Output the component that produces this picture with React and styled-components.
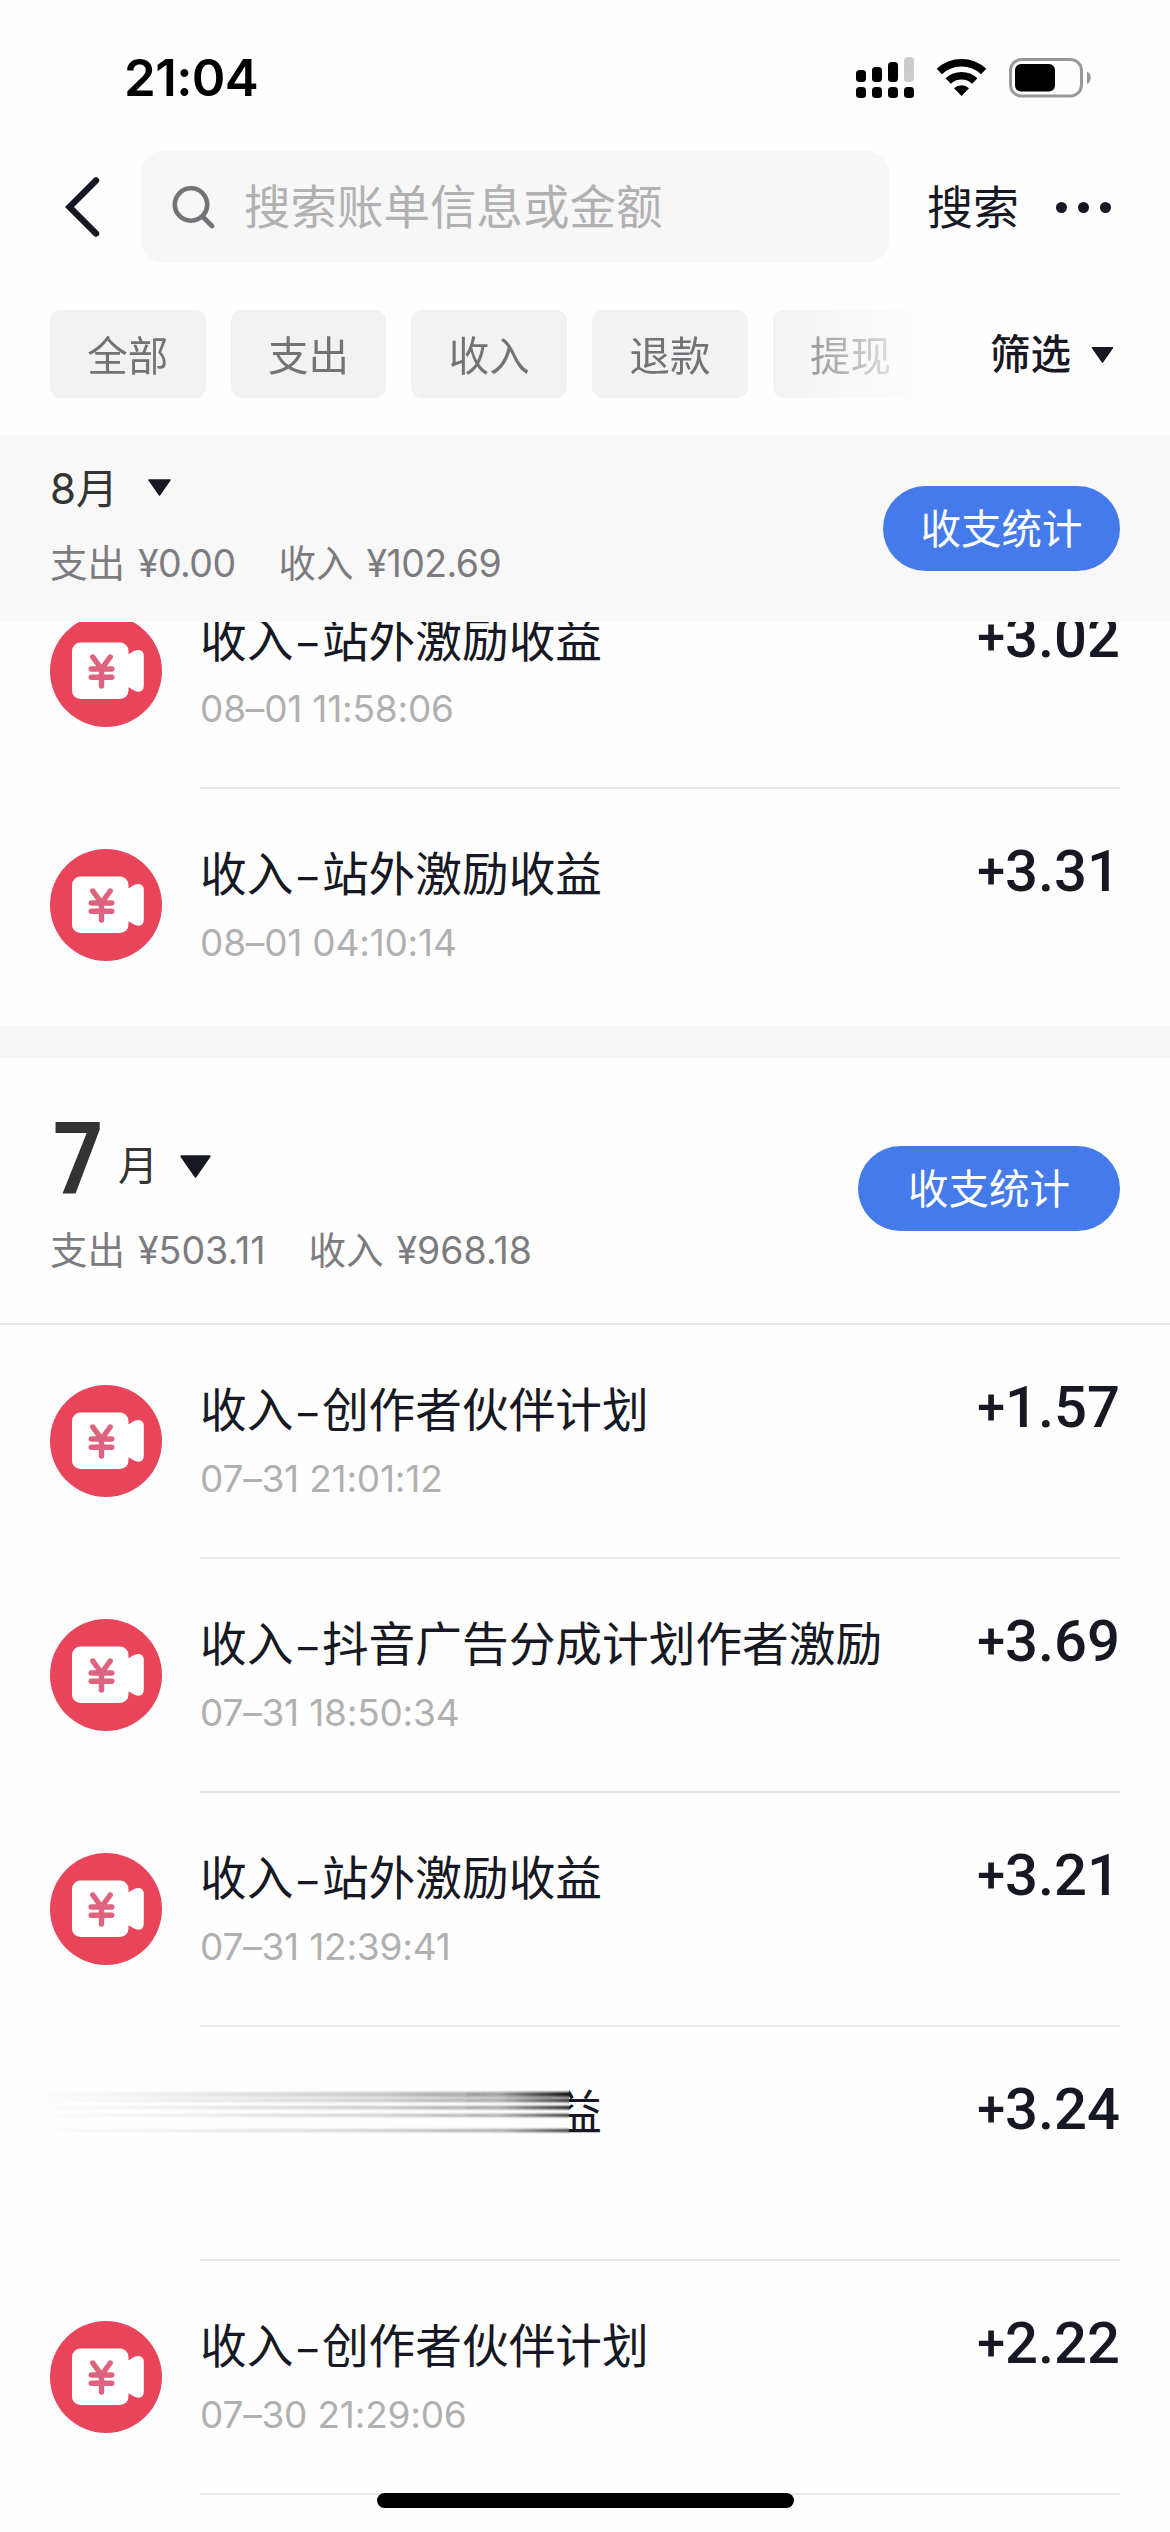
import React from 'react';
import styled, { createGlobalStyle } from 'styled-components';

const GlobalStyle = createGlobalStyle`
  * {
    box-sizing: border-box;
  }
  body {
    margin: 0;
    background-color: #fefefe;
    font-family: Inter, 'Noto Sans CJK SC', sans-serif;
    color: #161823;
  }
`;

const Screen = styled.main`
  position: relative;
  display: flex;
  flex-direction: column;
  width: 1170px;
  height: 2532px;
  overflow: hidden;
  background-color: #fefefe;
`;

const StatusBar = styled.div`
  display: flex;
  align-items: center;
  justify-content: space-between;
  height: 144px;
  padding: 12px 78px 0 124px;
  flex-shrink: 0;
`;
const Time = styled.span`
  color: #000;
  font-size: 51px;
  font-weight: 600;
  line-height: 60px;
  letter-spacing: -0.6px;
`;

const NavBar = styled.div`
  display: flex;
  align-items: center;
  height: 126px;
  padding: 0 58px 0 62px;
  flex-shrink: 0;
`;
const SearchBox = styled.div`
  display: flex;
  align-items: center;
  width: 748px;
  height: 112px;
  margin-left: 39px;
  padding-left: 30px;
  border-radius: 22px;
  background-color: #f7f7f7;
`;
const Placeholder = styled.span`
  margin-left: 29px;
  color: #b1b1b3;
  font-size: 46.5px;
  line-height: 60px;
`;
const SearchAction = styled.span`
  margin-left: 38px;
  font-size: 46px;
  line-height: 60px;
`;
const More = styled.div`
  display: flex;
  gap: 11px;
  margin-left: 37px;
  span {
    width: 11px;
    height: 11px;
    border-radius: 50%;
    background-color: #161823;
  }
`;

const FilterBar = styled.div`
  display: flex;
  align-items: center;
  height: 165px;
  padding: 3px 50px 0;
  flex-shrink: 0;
`;
const Chips = styled.div`
  display: flex;
  gap: 25px;
  width: 880px;
  flex-shrink: 0;
  overflow: hidden;
  mask-image: linear-gradient(to right, #000 715px, transparent 880px);
`;
const Chip = styled.span`
  width: 155.7px;
  height: 88px;
  flex-shrink: 0;
  border-radius: 11px;
  background-color: #f2f2f2;
  color: #737377;
  font-size: 40.5px;
  line-height: 93px;
  text-align: center;
`;
const FilterAction = styled.div`
  display: flex;
  align-items: center;
  gap: 20px;
  margin: 2px 0 0 60px;
  font-size: 40.5px;
  font-weight: 500;
  line-height: 60px;
  white-space: nowrap;
`;

const StickyMonth = styled.section`
  display: flex;
  align-items: center;
  justify-content: space-between;
  height: 187px;
  padding: 0 50px;
  flex-shrink: 0;
  background-color: #f8f8f8;
`;
const StickyInfo = styled.div`
  padding-bottom: 7px;
`;
const StickyTitle = styled.div`
  display: flex;
  align-items: center;
  color: #333;
  font-size: 42px;
  line-height: 50px;
  svg {
    margin: 0 0 2px 30px;
  }
`;
const Summary = styled.div`
  display: flex;
  gap: 43px;
  margin-top: ${(props) => props.$top}px;
  color: #7c7c80;
  font-size: 37.5px;
  font-weight: 400;
  line-height: 46px;
  white-space: pre;
`;
const Money = styled.span`
  margin-left: 13px;
  letter-spacing: ${(props) => props.$spacing}px;
`;
const StatButton = styled.button`
  width: ${(props) => props.$width}px;
  height: 85px;
  padding: 0;
  border: 0;
  border-radius: 43px;
  background-color: #447aea;
  color: #fff;
  font-family: inherit;
  font-size: 40.5px;
  line-height: 87px;
`;

const List = styled.div`
  flex: 1;
  overflow: hidden;
`;
const Group = styled.div`
  margin-top: ${(props) => props.$offset || 0}px;
`;
const Band = styled.div`
  height: 32px;
  margin-top: 3px;
  background-color: #f7f7f7;
`;
const MonthHeader = styled.section`
  display: flex;
  align-items: center;
  justify-content: space-between;
  height: 267px;
  padding: 0 50px 5px;
  border-bottom: 2px solid #e6e6e6;
`;
const MonthInfo = styled.div`
  padding-top: 6px;
`;
const MonthTitle = styled.div`
  display: flex;
  align-items: center;
  height: 100px;
  color: #333;
  svg {
    margin: 16px 0 0 22px;
  }
`;
const MonthNumber = styled.span`
  width: 65px;
  padding-left: 3px;
  font-family: Roboto, sans-serif;
  font-size: 101px;
  font-weight: 700;
  line-height: 100px;
  transform: scaleX(0.87);
  transform-origin: 3px 50%;
`;
const MonthUnit = styled.span`
  margin: 15px 0 0 3px;
  font-size: 40px;
  line-height: 50px;
`;

const Row = styled.div`
  display: grid;
  grid-template-columns: 150px 1fr;
  height: 234px;
  padding: 0 50px;
`;
const RowIcon = styled.div`
  padding-top: 60px;
`;
const RowBody = styled.div`
  display: flex;
  justify-content: space-between;
  border-bottom: 2px solid ${(props) => (props.$last ? 'transparent' : '#e6e6e6')};
`;
const RowTitle = styled.div`
  padding-top: 55px;
  font-size: 46.7px;
  line-height: 60px;
  white-space: nowrap;
`;
const Dash = styled.span`
  display: inline-block;
  width: 28.5px;
  font-size: 39px;
  text-align: center;
`;
const RowDate = styled.div`
  margin-top: 12px;
  color: #b0b0b1;
  font-size: 37px;
  line-height: 48px;
  letter-spacing: -0.2px;
`;
const Amount = styled.div`
  display: flex;
  padding-top: 52px;
  font-family: Roboto, sans-serif;
  font-size: 58px;
  font-weight: 500;
  line-height: 60px;
`;
const Sign = styled.span`
  font-size: 50px;
  line-height: 61px;
`;

const SmearedTitle = styled.div`
  display: flex;
  margin-left: -167px;
  padding-top: 55px;
  height: 115px;
`;
const CutGlyph = styled.span`
  display: flex;
  justify-content: flex-end;
  width: 33px;
  overflow: hidden;
  font-size: 46.7px;
  line-height: 60px;
`;

const HomeIndicator = styled.div`
  position: absolute;
  left: 377px;
  bottom: 24px;
  width: 417px;
  height: 15px;
  border-radius: 8px;
  background-color: #000;
`;

const chips = ['全部', '支出', '收入', '退款', '提现'];

const augustRows = [
  { title: '站外激励收益', date: '08–01 11:58:06', amount: '3.02' },
  { title: '站外激励收益', date: '08–01 04:10:14', amount: '3.31' },
];

const julyRows = [
  { title: '创作者伙伴计划', date: '07–31 21:01:12', amount: '1.57' },
  { title: '抖音广告分成计划作者激励', date: '07–31 18:50:34', amount: '3.69' },
  { title: '站外激励收益', date: '07–31 12:39:41', amount: '3.21' },
  { smeared: true, amount: '3.24' },
  { title: '创作者伙伴计划', date: '07–30 21:29:06', amount: '2.22' },
];

function StatusIcons() {
  return (
    <svg width="236" height="46" viewBox="856 55 236 46">
      <g>
        <rect x="856" y="70" width="10" height="12" rx="3.5" />
        <rect x="872" y="67" width="10" height="15" rx="3.5" />
        <rect x="888" y="62" width="10" height="20" rx="3.5" />
        <rect x="904" y="57" width="10" height="25" rx="3.5" fill="#ccc" />
        {[856, 872, 888, 904].map((x) => (
          <rect key={x} x={x} y="87" width="10" height="11" rx="3.5" />
        ))}
      </g>
      <g fill="none" stroke="#000" strokeWidth="7.6">
        <path d="M939.3 71.6a32.3 32.3 0 0 1 44.4 0" />
        <path d="M948.2 81a19.3 19.3 0 0 1 26.6 0" />
      </g>
      <path d="M954 88.2a11 11 0 0 1 15 0L961.5 96z" />
      <rect x="1010.5" y="59.5" width="71" height="36.5" rx="11" fill="none" stroke="#999" strokeWidth="3" />
      <rect x="1015" y="64" width="40" height="27.5" rx="6" />
      <path d="M1087 71.5c5 2 5 10.5 0 12.5z" fill="#999" />
    </svg>
  );
}

function BackIcon() {
  return (
    <svg width="40" height="64" viewBox="0 0 40 64" fill="none">
      <path d="M34 5.5 L7.5 32 L34 58.5" stroke="#161823" strokeWidth="6.4" strokeLinecap="round" strokeLinejoin="miter" />
    </svg>
  );
}

function SearchIcon() {
  return (
    <svg width="44" height="44" viewBox="0 0 44 44" fill="none" stroke="#737377" strokeWidth="4.6" strokeLinecap="round">
      <circle cx="20" cy="19.5" r="16.2" />
      <path d="M32 32 L41 41" />
    </svg>
  );
}

function Caret({ width, height }) {
  return (
    <svg width={width} height={height} viewBox="0 0 22 16">
      <path d="M1 0.8h20L11 15.2z" fill="#161823" stroke="#161823" strokeWidth="1.4" strokeLinejoin="round" />
    </svg>
  );
}

function IncomeIcon() {
  return (
    <svg width="112" height="112" viewBox="0 0 112 112">
      <circle cx="56" cy="56" r="56" fill="#e8455a" />
      <rect x="22" y="27.5" width="56.5" height="56.5" rx="8.5" fill="#fff" />
      <path d="M78 39.5 L84.5 35.8 Q93.8 32.5 93.8 41.5 V70 Q93.8 79 84.5 75.8 L78 72z" fill="#fff" />
      <path
        d="M42.8 42 L51.5 54 L60.2 42 M51.5 54 V71 M41.2 54 H61.8 M41.2 62.3 H61.8"
        fill="none"
        stroke="#de637f"
        strokeWidth="5.4"
        strokeLinecap="round"
      />
    </svg>
  );
}

// horizontal streaks left of the last visible character
function Smear() {
  return (
    <svg width="536" height="60" viewBox="0 0 536 60">
      <defs>
        <linearGradient id="streak" x1="0" x2="536" y1="0" y2="0" gradientUnits="userSpaceOnUse">
          <stop offset="0" stopColor="#111" stopOpacity="0" />
          <stop offset="0.3" stopColor="#111" stopOpacity="0.08" />
          <stop offset="0.65" stopColor="#111" stopOpacity="0.22" />
          <stop offset="0.87" stopColor="#111" stopOpacity="0.42" />
          <stop offset="1" stopColor="#111" />
        </linearGradient>
        <filter id="soften" x="0" y="-10%" width="100%" height="120%">
          <feGaussianBlur stdDeviation="0 0.9" />
        </filter>
      </defs>
      <g fill="url(#streak)" filter="url(#soften)">
        <rect x="0" y="10" width="536" height="4.5" />
        <rect x="0" y="14" width="536" height="4" opacity="0.35" />
        <rect x="0" y="17.5" width="536" height="2.5" />
        <rect x="0" y="24" width="536" height="3.2" />
        <rect x="0" y="32" width="536" height="2.6" />
        <rect x="0" y="47.3" width="536" height="2.6" />
      </g>
    </svg>
  );
}

function IncomeAmount({ value }) {
  return (
    <Amount>
      <Sign>+</Sign>
      {value}
    </Amount>
  );
}

function Record({ item, last }) {
  if (item.smeared) {
    return (
      <Row>
        <div />
        <RowBody>
          <SmearedTitle>
            <Smear />
            <CutGlyph>益</CutGlyph>
          </SmearedTitle>
          <IncomeAmount value={item.amount} />
        </RowBody>
      </Row>
    );
  }
  return (
    <Row>
      <RowIcon>
        <IncomeIcon />
      </RowIcon>
      <RowBody $last={last}>
        <div>
          <RowTitle>
            收入<Dash>–</Dash>
            {item.title}
          </RowTitle>
          <RowDate>{item.date}</RowDate>
        </div>
        <IncomeAmount value={item.amount} />
      </RowBody>
    </Row>
  );
}

function Totals({ spent, earned, top, spacing }) {
  return (
    <Summary $top={top}>
      <span>
        支出<Money $spacing={spacing}>{spent}</Money>
      </span>
      <span>
        收入<Money $spacing={spacing}>{earned}</Money>
      </span>
    </Summary>
  );
}

export default function App() {
  return (
    <>
      <GlobalStyle />
      <Screen>
        <StatusBar>
          <Time>21:04</Time>
          <StatusIcons />
        </StatusBar>
        <NavBar>
          <BackIcon />
          <SearchBox>
            <SearchIcon />
            <Placeholder>搜索账单信息或金额</Placeholder>
          </SearchBox>
          <SearchAction>搜索</SearchAction>
          <More>
            <span />
            <span />
            <span />
          </More>
        </NavBar>
        <FilterBar>
          <Chips>
            {chips.map((chip) => (
              <Chip key={chip}>{chip}</Chip>
            ))}
          </Chips>
          <FilterAction>
            筛选
            <Caret width={23} height={16} />
          </FilterAction>
        </FilterBar>
        <StickyMonth>
          <StickyInfo>
            <StickyTitle>
              8月
              <Caret width={23} height={17} />
            </StickyTitle>
            <Totals spent="¥0.00" earned="¥102.69" top={27} spacing={-0.6} />
          </StickyInfo>
          <StatButton $width={237}>收支统计</StatButton>
        </StickyMonth>
        <List>
          <Group $offset={-67}>
            {augustRows.map((item, i) => (
              <Record key={item.date} item={item} last={i === augustRows.length - 1} />
            ))}
          </Group>
          <Band />
          <MonthHeader>
            <MonthInfo>
              <MonthTitle>
                <MonthNumber>7</MonthNumber>
                <MonthUnit>月</MonthUnit>
                <Caret width={31} height={23} />
              </MonthTitle>
              <Totals spent="¥503.11" earned="¥968.18" top={19} spacing={0} />
            </MonthInfo>
            <StatButton $width={262}>收支统计</StatButton>
          </MonthHeader>
          <Group>
            {julyRows.map((item) => (
              <Record key={item.amount} item={item} />
            ))}
          </Group>
        </List>
        <HomeIndicator />
      </Screen>
    </>
  );
}
